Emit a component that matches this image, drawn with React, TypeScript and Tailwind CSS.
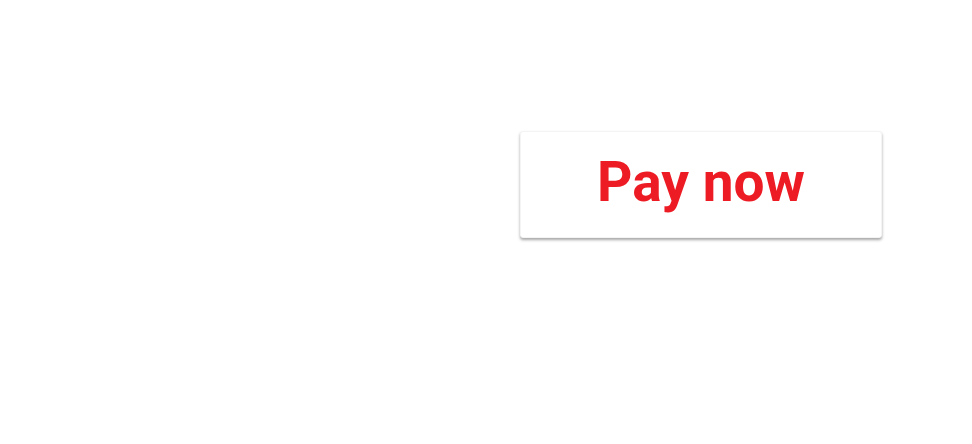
export default function App() {
  return (
    <div className="min-h-[444px] bg-white pl-[520px] pt-[131px]">
      <button
        type="button"
        className="flex h-[107px] w-[362px] items-center justify-center rounded-[3px] border border-[#f4f4f4] bg-white pb-[4px] shadow-[0_2px_3px_rgba(0,0,0,0.35)]"
      >
        <span
          className="text-[55px] font-bold leading-none text-[#ed1c24]"
          style={{ fontFamily: 'Roboto, "Liberation Sans", sans-serif' }}
        >
          Pay now
        </span>
      </button>
    </div>
  )
}
